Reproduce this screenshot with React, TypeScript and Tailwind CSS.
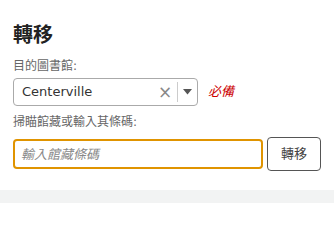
const font = { fontFamily: '"DejaVu Sans", "Noto Sans CJK TC", sans-serif' };

export default function App() {
  return (
    <div className="w-[334px] h-[203px] bg-white flex flex-col" style={font}>
      <div className="flex-1 pl-[13px] pr-[13px] pt-[22px]">
        <h2 className="text-[20px] leading-[26px] font-bold text-[#222]">轉移</h2>

        {/* Destination library */}
        <label className="block mt-[10px] text-[12px] leading-[16px] text-[#666]">目的圖書館:</label>
        <div className="mt-[4px] flex items-center gap-[10px]">
          <div className="w-[185px] h-[28px] border border-[#aaa] rounded-[4px] flex items-center">
            <span className="flex-1 pl-[8px] text-[13px] text-[#333]">Centerville</span>
            <span className="w-[24px] flex items-center justify-center text-[#888] text-[17px] leading-none">×</span>
            <span className="w-px h-[20px] bg-[#ccc]" />
            <span className="w-[19px] flex items-center justify-center">
              <svg width="9" height="6" viewBox="0 0 9 6">
                <path d="M0 0h9L4.5 5.5z" fill="#555" />
              </svg>
            </span>
          </div>
          <span className="text-[13px] italic text-[#c00]">必備</span>
        </div>

        {/* Barcode */}
        <label className="block mt-[8px] text-[12px] leading-[16px] text-[#666]">掃瞄館藏或輸入其條碼:</label>
        <div className="mt-[7px] flex items-center gap-[4px]">
          <input
            autoFocus
            className="w-[250px] h-[30px] border-2 border-[#e09400] rounded-[4px] px-[6px] text-[13px] italic outline-none caret-black placeholder:text-[#888]"
            placeholder="輸入館藏條碼"
            style={font}
          />
          <button className="w-[54px] h-[34px] border border-[#555] rounded-[4px] text-[13px] text-[#444] bg-white">
            轉移
          </button>
        </div>
      </div>
      <div className="h-[13px] bg-[#f2f3f3]" />
    </div>
  );
}
